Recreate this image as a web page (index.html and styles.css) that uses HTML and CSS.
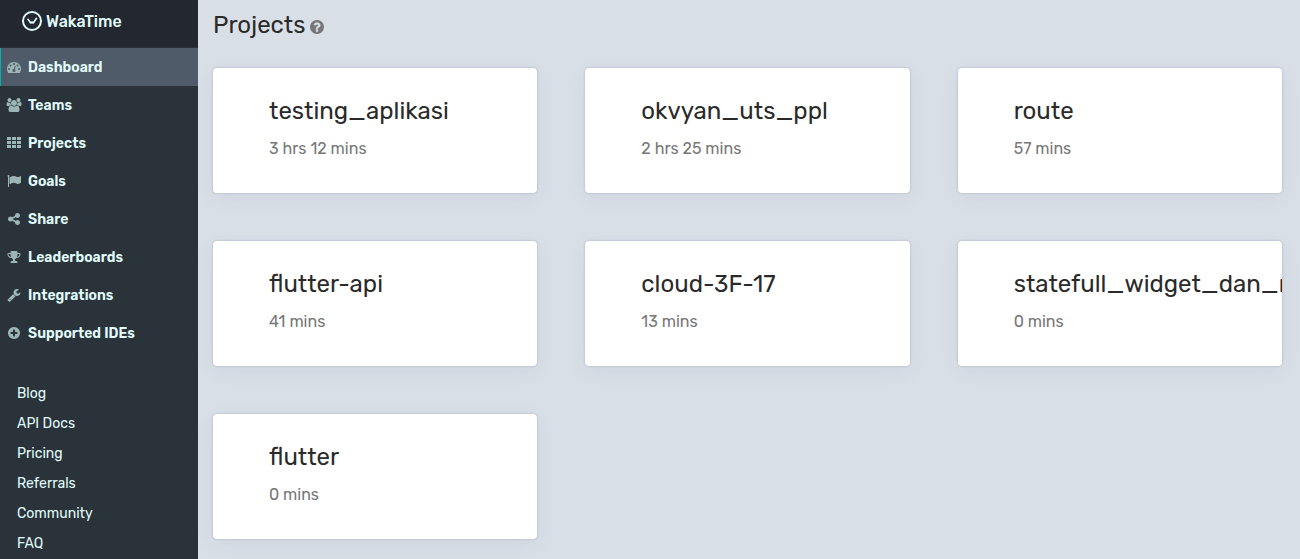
FILE: index.html
```html
<!DOCTYPE html>
<html lang="en">
<head>
<meta charset="utf-8">
<title>Projects - WakaTime</title>
<link rel="stylesheet" href="styles.css">
</head>
<body>
<div class="app">
  <aside class="sidebar">
    <a class="brand" href="#">
      <svg class="logo" viewBox="0 0 20 20" fill="none" stroke="currentColor" stroke-linecap="round" stroke-linejoin="round" aria-hidden="true"><circle cx="10" cy="10" r="9" stroke-width="2"/><path d="M6 8.300l2.700 3.700 1.300-1 1.300 1 3.200-4.700" stroke-width="1.600"/></svg>
      <span>WakaTime</span>
    </a>
    <nav class="nav" aria-label="Main">
      <a class="nav-item active" href="#"><svg class="icon" viewBox="0 0 1792 1792" aria-hidden="true"><path d="M384 1152q0-53-37.500-90.500t-90.500-37.500-90.500 37.500-37.500 90.500 37.500 90.500 90.500 37.500 90.500-37.500 37.500-90.500zm192-448q0-53-37.500-90.500t-90.500-37.500-90.500 37.500-37.500 90.500 37.500 90.500 90.500 37.500 90.500-37.500 37.500-90.500zm428 481l101-382q6-26-7.500-48.500t-38.500-29.500-48 6.500-30 39.500l-101 382q-60 5-107 43.500t-63 98.500q-20 77 20 146t117 89 146-20 89-117q16-60-6-117t-72-91zm660-33q0-53-37.500-90.500t-90.500-37.500-90.500 37.500-37.500 90.500 37.500 90.500 90.500 37.500 90.500-37.500 37.500-90.500zm-640-640q0-53-37.500-90.500t-90.500-37.500-90.500 37.500-37.500 90.500 37.500 90.500 90.500 37.500 90.500-37.500 37.500-90.500zm448 192q0-53-37.500-90.500t-90.500-37.500-90.500 37.500-37.500 90.500 37.500 90.500 90.500 37.500 90.500-37.500 37.500-90.500zm320 448q0 261-141 483-19 29-54 29h-1402q-35 0-54-29-141-221-141-483 0-182 71-348t191-286 286-191 348-71 348 71 286 191 191 286 71 348z"/></svg>Dashboard</a>
      <a class="nav-item" href="#"><svg class="icon" viewBox="0 0 1792 1792" aria-hidden="true"><path d="M529 896q-162 5-265 128h-134q-82 0-138-40.500t-56-118.500q0-353 124-353 6 0 43.500 21t97.500 42.500 119 21.500q67 0 133-23-5 37-5 66 0 159 93 293zm1071 637q0 120-73 189.500t-194 69.500h-874q-121 0-194-69.500t-73-189.500q0-53 3.500-103.500t14-109 26.500-108.500 43-97.500 62-81 85.500-53.500 111.500-20q10 0 43 21.500t73 48 107 48 135 21.500 135-21.500 107-48 73-48 43-21.500q61 0 111.500 20t85.500 53.500 62 81 43 97.500 26.500 108.500 14 109 3.500 103.500zm-1024-1277q0 106-75 181t-181 75-181-75-75-181 75-181 181-75 181 75 75 181zm704 384q0 159-112.500 271.500t-271.500 112.500-271.500-112.500-112.500-271.500 112.500-271.500 271.500-112.500 271.500 112.500 112.500 271.500zm576 225q0 78-56 118.500t-138 40.500h-134q-103-123-265-128 93-134 93-293 0-29-5-66 66 23 133 23 59 0 119-21.500t97.500-42.500 43.500-21q124 0 124 353zm-128-609q0 106-75 181t-181 75-181-75-75-181 75-181 181-75 181 75 75 181z"/></svg>Teams</a>
      <a class="nav-item" href="#"><svg class="icon" viewBox="0 0 14 14" aria-hidden="true"><path d="M0 1h4v3H0zM5 1h4v3H5zM10 1h4v3h-4zM0 5h4v3H0zM5 5h4v3H5zM10 5h4v3h-4zM0 9h4v3H0zM5 9h4v3H5zM10 9h4v3h-4z"/></svg>Projects</a>
      <a class="nav-item" href="#"><svg class="icon" viewBox="0 0 1792 1792" aria-hidden="true"><path d="M320 256q0 72-64 110v1266q0 13-9.500 22.500t-22.500 9.500h-64q-13 0-22.500-9.500t-9.500-22.500v-1266q-64-38-64-110 0-53 37.500-90.500t90.500-37.500 90.500 37.500 37.500 90.500zm1472 64v763q0 25-12.500 38.500t-39.500 27.500q-215 116-369 116-61 0-123.500-22t-108.500-48-115.500-48-142.500-22q-192 0-464 146-17 9-33 9-26 0-45-19t-19-45v-742q0-32 31-55 21-14 79-43 236-120 421-120 107 0 200 29t219 88q38 19 88 19 54 0 117.500-21t110-47 88-47 54.500-21q26 0 45 19t19 45z"/></svg>Goals</a>
      <a class="nav-item" href="#"><svg class="icon" viewBox="0 0 1792 1792" aria-hidden="true"><path d="M1344 1024q133 0 226.500 93.500t93.500 226.500-93.500 226.500-226.500 93.500-226.500-93.500-93.500-226.500q0-12 2-34l-360-180q-92 86-218 86-133 0-226.500-93.500t-93.500-226.500 93.500-226.500 226.500-93.500q126 0 218 86l360-180q-2-22-2-34 0-133 93.500-226.500t226.500-93.500 226.500 93.500 93.500 226.500-93.500 226.500-226.500 93.500q-126 0-218-86l-360 180q2 22 2 34t-2 34l360 180q92-86 218-86z"/></svg>Share</a>
      <a class="nav-item" href="#"><svg class="icon" viewBox="0 0 1792 1792" aria-hidden="true"><path d="M522 883q-74-162-74-371h-256v96q0 78 94.500 162t235.500 113zm1078-275v-96h-256q0 209-74 371 141-29 235.500-113t94.500-162zm128-128v128q0 71-41.500 143t-112 130-173 97.500-215.500 44.500q-42 54-95 95-38 34-52.500 72.500t-14.500 89.500q0 54 30.500 91t97.500 37q75 0 133.500 45.500t58.500 114.500v64q0 14-9 23t-23 9h-832q-14 0-23-9t-9-23v-64q0-69 58.500-114.500t133.500-45.500q67 0 97.500-37t30.500-91q0-51-14.500-89.500t-52.500-72.500q-53-41-95-95-113-5-215.500-44.500t-173-97.500-112-130-41.500-143v-128q0-40 28-68t68-28h288v-96q0-66 47-113t113-47h576q66 0 113 47t47 113v96h288q40 0 68 28t28 68z"/></svg>Leaderboards</a>
      <a class="nav-item" href="#"><svg class="icon" viewBox="0 0 1792 1792" aria-hidden="true"><path d="M448 1472q0-26-19-45t-45-19-45 19-19 45 19 45 45 19 45-19 19-45zm644-420l-682 682q-37 37-90 37-52 0-91-37l-106-108q-38-36-38-90 0-53 38-91l681-681q39 98 114.500 173.500t173.500 114.500zm634-435q0 39-23 106-47 134-164.500 217.500t-258.500 83.500q-185 0-316.500-131.500t-131.500-316.500 131.500-316.500 316.500-131.500q58 0 121.500 16.500t107.500 46.500q16 11 16 28t-16 28l-293 169v224l193 107q5-3 79-48.500t135.500-81 70.500-35.500q15 0 23.500 10t8.500 25z"/></svg>Integrations</a>
      <a class="nav-item" href="#"><svg class="icon" viewBox="0 0 1792 1792" aria-hidden="true"><path d="M1344 960v-128q0-26-19-45t-45-19h-256v-256q0-26-19-45t-45-19h-128q-26 0-45 19t-19 45v256h-256q-26 0-45 19t-19 45v128q0 26 19 45t45 19h256v256q0 26 19 45t45 19h128q26 0 45-19t19-45v-256h256q26 0 45-19t19-45zm320-64q0 209-103 385.500t-279.500 279.500-385.500 103-385.500-103-279.500-279.500-103-385.500 103-385.500 279.500-279.500 385.500-103 385.500 103 279.500 279.500 103 385.500z"/></svg>Supported IDEs</a>
    </nav>
    <nav class="links" aria-label="More">
      <a href="#">Blog</a>
      <a href="#">API Docs</a>
      <a href="#">Pricing</a>
      <a href="#">Referrals</a>
      <a href="#">Community</a>
      <a href="#">FAQ</a>
    </nav>
  </aside>
  <main class="main">
    <header class="heading">
      <h1>Projects</h1>
      <button class="help" type="button" aria-label="Help"><svg viewBox="128 128 1536 1536" aria-hidden="true"><path d="M1024 1376v-192q0-14-9-23t-23-9h-192q-14 0-23 9t-9 23v192q0 14 9 23t23 9h192q14 0 23-9t9-23zm256-672q0-88-55.500-163t-138.500-116-170-41q-243 0-371 213-15 24 8 42l132 100q7 6 19 6 16 0 25-12 53-68 86-92 34-24 86-24 48 0 85.500 26t37.500 59q0 38-20 61t-68 45q-63 28-115.500 86.500t-52.500 125.500v36q0 14 9 23t23 9h192q14 0 23-9t9-23q0-19 21.500-49.500t54.500-49.500q32-18 49-28.500t46-35 44.500-48 28-60.500 12.500-81zm384 192q0 209-103 385.500t-279.500 279.500-385.500 103-385.500-103-279.500-279.500-103-385.500 103-385.500 279.500-279.500 385.500-103 385.500 103 279.500 279.500 103 385.500z"/></svg></button>
    </header>
    <div class="grid">
      <a class="card" href="#"><h2>testing_aplikasi</h2><p>3 hrs 12 mins</p></a>
      <a class="card" href="#"><h2>okvyan_uts_ppl</h2><p>2 hrs 25 mins</p></a>
      <a class="card" href="#"><h2>route</h2><p>57 mins</p></a>
      <a class="card" href="#"><h2>flutter-api</h2><p>41 mins</p></a>
      <a class="card" href="#"><h2>cloud-3F-17</h2><p>13 mins</p></a>
      <a class="card" href="#"><h2>statefull_widget_dan_n</h2><p>0 mins</p></a>
      <a class="card" href="#"><h2>flutter</h2><p>0 mins</p></a>
    </div>
  </main>
</div>
</body>
</html>
```
FILE: styles.css
```css
* {
  box-sizing: border-box;
}

body {
  margin: 0;
  background: #d9dfe7;
  color: #2a2a2a;
  font-family: Rubik, Roboto, "Liberation Sans", sans-serif;
}

a {
  color: inherit;
  text-decoration: none;
}

.app {
  display: flex;
  height: 100vh;
  overflow: hidden;
}

.sidebar {
  flex: 0 0 198px;
  background: #293339;
  color: #e1fbfb;
  overflow: hidden;
}

.brand {
  display: flex;
  align-items: center;
  gap: 4px;
  height: 48px;
  padding: 0 22px 5px;
  background: #23272f;
  border-bottom: 1px solid #2c3138;
  font-size: 16px;
  font-weight: 500;
}

.logo {
  width: 20px;
  height: 20px;
}

.nav-item {
  display: flex;
  align-items: center;
  gap: 7px;
  height: 38px;
  padding-left: 6px;
  border-left: 1px solid transparent;
  font-size: 14px;
  font-weight: 600;
}

.nav-item.active {
  background: #505b69;
  border-left-color: #00b3ad;
}

.icon {
  width: 14px;
  height: 14px;
  fill: #9cb5b5;
  overflow: visible;
}

.links {
  display: flex;
  flex-direction: column;
  padding: 27px 17px 0;
  font-size: 14px;
  line-height: 30px;
}

.main {
  flex: 1;
  min-width: 0;
  padding: 8px 18px 0 15px;
}

.heading {
  display: flex;
  align-items: center;
  gap: 5px;
  height: 34px;
  margin-bottom: 26px;
}

h1,
h2 {
  margin: 0;
  font-size: 24px;
  font-weight: 400;
  line-height: 34px;
}

.help {
  display: flex;
  padding: 4px 0 0;
  border: 0;
  background: none;
}

.help svg {
  width: 14px;
  height: 14px;
  fill: #777;
}

.grid {
  display: grid;
  grid-template-columns: repeat(3, minmax(0, 1fr));
  gap: 48px;
}

.card {
  padding: 26px 0 32px 56px;
  border-radius: 4px;
  background: #fff;
  box-shadow: 0 0 2px rgba(40, 60, 80, 0.3), 0 5px 20px rgba(40, 60, 80, 0.06);
  overflow: hidden;
  white-space: nowrap;
}

.card p {
  margin: 9px 0 0;
  color: #777;
  font-size: 16px;
  line-height: 24px;
}
```
